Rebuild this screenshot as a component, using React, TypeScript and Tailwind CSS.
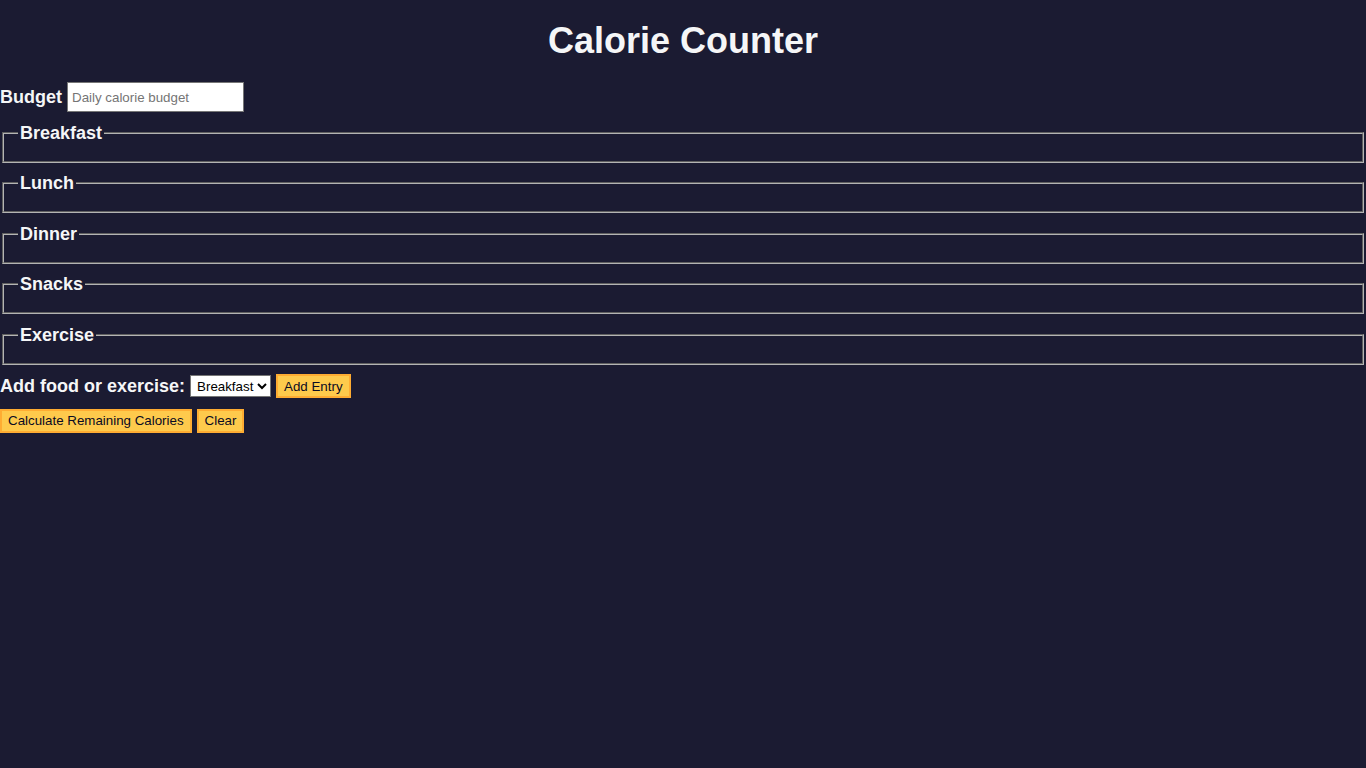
import React, { useState } from 'react';

const meals = ['Breakfast', 'Lunch', 'Dinner', 'Snacks', 'Exercise'];

function Section({ name }: { name: string }) {
  return (
    <fieldset className="mx-[2px] mt-[10.2px] border-2 border-[#b4b4b4] [border-style:groove] px-[14px] pt-[5.6px] pb-[12px]">
      <legend className="px-[2px] text-[18px] font-bold leading-[20.7px]">{name}</legend>
      <div />
    </fieldset>
  );
}

const btn =
  'h-[24px] border-2 border-[#feac32] bg-[#feca4c] px-[6px] text-[13.33px] leading-none text-[#0a0a23]';

export default function App() {
  const [budget, setBudget] = useState('');
  const [entry, setEntry] = useState('breakfast');

  return (
    <div className="min-h-screen bg-[#1b1b32] text-[#f5f6f7] font-['Liberation_Sans',Arial,sans-serif]">
      <h1 className="pt-[20px] pb-[18px] text-center text-[36px] font-bold leading-[41.4px]">Calorie Counter</h1>

      <form onSubmit={(e) => e.preventDefault()}>
        <div className="mt-[3px] mb-[2px] flex items-center">
          <label htmlFor="budget" className="text-[18px] font-bold">
            Budget
          </label>
          <input
            id="budget"
            type="number"
            value={budget}
            onChange={(e) => setBudget(e.target.value)}
            placeholder="Daily calorie budget"
            className="ml-[5px] h-[30px] w-[177px] border border-[#767676] bg-white px-[4px] text-[13.33px] text-black placeholder:text-[#757575]"
          />
        </div>

        {meals.map((m) => (
          <Section key={m} name={m} />
        ))}

        <div className="mt-[8px] flex items-center">
          <label htmlFor="entry-dropdown" className="text-[18px] font-bold">
            Add food or exercise:
          </label>
          <select
            id="entry-dropdown"
            value={entry}
            onChange={(e) => setEntry(e.target.value)}
            className="ml-[5px] h-[22px] border border-[#767676] bg-white pl-[2px] text-[13.33px] text-black"
          >
            {meals.map((m) => (
              <option key={m} value={m.toLowerCase()}>
                {m}
              </option>
            ))}
          </select>
          <button type="button" className={`${btn} ml-[5px]`}>
            Add Entry
          </button>
        </div>

        <div className="mt-[9px] flex items-center">
          <button type="submit" className={btn}>
            Calculate Remaining Calories
          </button>
          <button type="button" className={`${btn} ml-[5px]`}>
            Clear
          </button>
        </div>
      </form>
    </div>
  );
}
